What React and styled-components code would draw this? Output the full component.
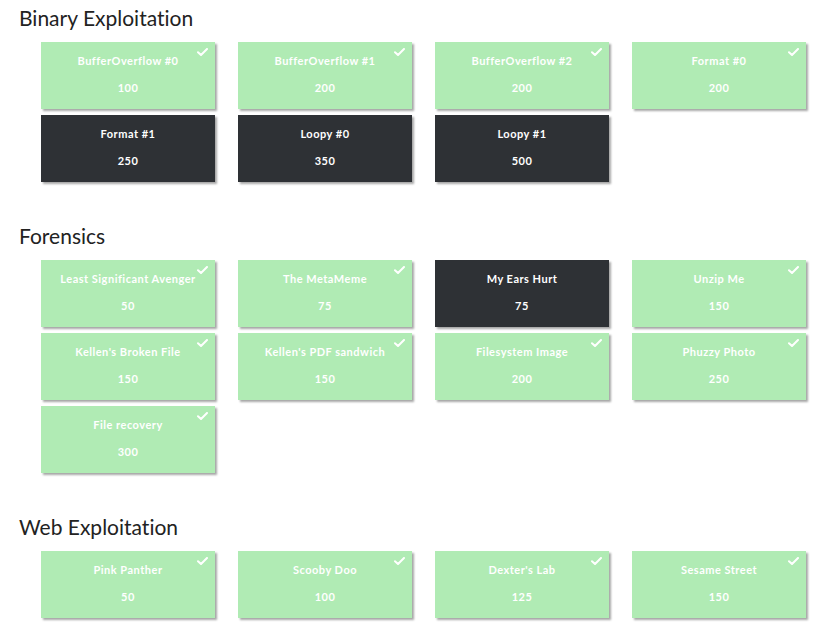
import styled, { createGlobalStyle } from "styled-components";

const GlobalStyle = createGlobalStyle`
  body {
    margin: 0;
    background: #fff;
    font-family: Lato, "Open Sans", sans-serif;
    font-variant-ligatures: none;
  }
`;

const sections = [
  {
    name: "Binary Exploitation",
    problems: [
      { title: "BufferOverflow #0", points: 100, solved: true },
      { title: "BufferOverflow #1", points: 200, solved: true },
      { title: "BufferOverflow #2", points: 200, solved: true },
      { title: "Format #0", points: 200, solved: true },
      { title: "Format #1", points: 250 },
      { title: "Loopy #0", points: 350 },
      { title: "Loopy #1", points: 500 },
    ],
  },
  {
    name: "Forensics",
    problems: [
      { title: "Least Significant Avenger", points: 50, solved: true },
      { title: "The MetaMeme", points: 75, solved: true },
      { title: "My Ears Hurt", points: 75 },
      { title: "Unzip Me", points: 150, solved: true },
      { title: "Kellen's Broken File", points: 150, solved: true },
      { title: "Kellen's PDF sandwich", points: 150, solved: true },
      { title: "Filesystem Image", points: 200, solved: true },
      { title: "Phuzzy Photo", points: 250, solved: true },
      { title: "File recovery", points: 300, solved: true },
    ],
  },
  {
    name: "Web Exploitation",
    problems: [
      { title: "Pink Panther", points: 50, solved: true },
      { title: "Scooby Doo", points: 100, solved: true },
      { title: "Dexter's Lab", points: 125, solved: true },
      { title: "Sesame Street", points: 150, solved: true },
    ],
  },
];

const Check = () => (
  <svg width="11" height="8" viewBox="0 0 11 8">
    <path
      d="M1 4.2 L4 7 L10 1"
      fill="none"
      stroke="#fff"
      strokeWidth="2"
      strokeLinecap="round"
      strokeLinejoin="round"
    />
  </svg>
);

const App = () => {
  return (
    <Page>
      <GlobalStyle />
      {sections.map((s) => (
        <Section key={s.name}>
          <Heading>{s.name}</Heading>
          <Grid>
            {s.problems.map((p) => (
              <Card key={p.title} $solved={p.solved}>
                {p.solved && (
                  <Mark>
                    <Check />
                  </Mark>
                )}
                <Title>{p.title}</Title>
                <Points>{p.points}</Points>
              </Card>
            ))}
          </Grid>
        </Section>
      ))}
    </Page>
  );
};

const Page = styled.div`
  display: flex;
  flex-direction: column;
  gap: 42px;
  padding: 6px 23px 20px 19px;
`;
const Section = styled.section`
  display: flex;
  flex-direction: column;
`;
const Heading = styled.h2`
  margin: 0 0 12px 0;
  font-size: 21px;
  line-height: 24px;
  font-weight: 400;
  color: #222;
`;
const Grid = styled.div`
  display: grid;
  grid-template-columns: repeat(4, 174px);
  column-gap: 23px;
  row-gap: 6px;
  padding-left: 22px;
`;
const Card = styled.div`
  position: relative;
  height: 67px;
  box-sizing: border-box;
  padding-top: 12px;
  display: flex;
  flex-direction: column;
  align-items: center;
  gap: 13px;
  background: ${(p) => (p.$solved ? "#b0ebb4" : "#2e3135")};
  box-shadow: 2px 2px 2px rgba(0, 0, 0, 0.35);
  color: #fff;
  font-weight: 700;
  font-size: 11px;
  letter-spacing: 0.5px;
`;
const Mark = styled.span`
  position: absolute;
  top: 6px;
  right: 7px;
  display: flex;
`;
const Title = styled.div`
  line-height: 14px;
  white-space: nowrap;
`;
const Points = styled.div`
  line-height: 14px;
`;

export default App;
